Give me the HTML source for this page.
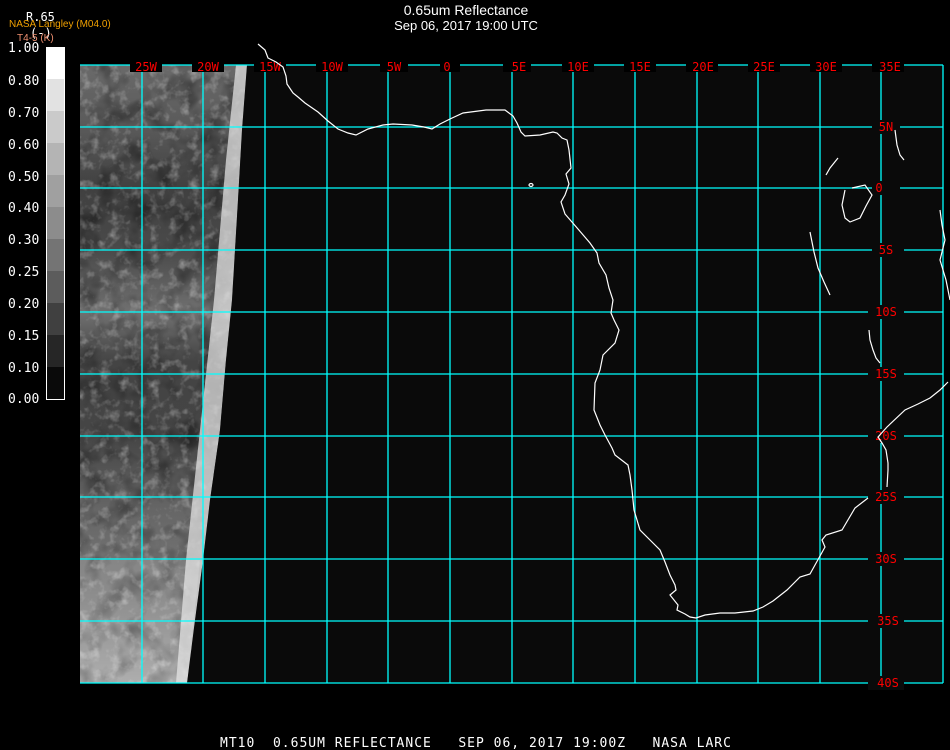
<!DOCTYPE html>
<html><head><meta charset="utf-8"><style>
html,body{margin:0;padding:0;background:#000;width:950px;height:750px;overflow:hidden}
svg{display:block}
text{font-family:"DejaVu Sans Mono","Liberation Mono",monospace}
</style></head><body>
<svg width="950" height="750" viewBox="0 0 950 750" xmlns="http://www.w3.org/2000/svg">
<defs>
<filter id="nw" x="0" y="0" width="100%" height="100%" filterUnits="userSpaceOnUse">
<feTurbulence type="fractalNoise" baseFrequency="0.1" numOctaves="3" seed="4"/>
<feColorMatrix type="matrix" values="0 0 0 0 1  0 0 0 0 1  0 0 0 0 1  1.6 0 0 0 -0.8"/>
</filter>
<filter id="nd" x="0" y="0" width="100%" height="100%" filterUnits="userSpaceOnUse">
<feTurbulence type="fractalNoise" baseFrequency="0.04" numOctaves="3" seed="9"/>
<feColorMatrix type="matrix" values="0 0 0 0 0  0 0 0 0 0  0 0 0 0 0  -1.5 0 0 0 0.85"/>
</filter>
<clipPath id="cp"><polygon points="80,65 247,65 242,130 238,200 232,300 226,360 220,430 210,500 203,560 195,620 187,683 80,683"/></clipPath>
<linearGradient id="v" x1="0" y1="0" x2="0" y2="1">
<stop offset="0" stop-color="#6a6a6a"/>
<stop offset="0.1" stop-color="#5a5a5a"/>
<stop offset="0.2" stop-color="#404040"/>
<stop offset="0.3" stop-color="#4a4a4a"/>
<stop offset="0.4" stop-color="#707070"/>
<stop offset="0.48" stop-color="#444"/>
<stop offset="0.6" stop-color="#454545"/>
<stop offset="0.72" stop-color="#666"/>
<stop offset="0.85" stop-color="#777"/>
<stop offset="1" stop-color="#a0a0a0"/>
</linearGradient>
</defs>
<text x="466" y="15" fill="#fff" font-size="14" text-anchor="middle" style="font-family:'Liberation Sans',sans-serif">0.65um Reflectance</text>
<text x="466" y="30" fill="#fff" font-size="13" text-anchor="middle" style="font-family:'Liberation Sans',sans-serif">Sep 06, 2017 19:00 UTC</text>
<text x="26" y="21" fill="#fff" font-size="12">R.65</text>
<text x="30" y="37" fill="#fff" font-size="12">(-)</text>
<text x="9" y="27" fill="#f0a000" font-size="10" style="font-family:'Liberation Sans',sans-serif">NASA Langley (M04.0)</text>
<text x="17" y="41" fill="#f09070" font-size="10" style="font-family:'Liberation Sans',sans-serif">T4-5 (K)</text>
<g>
<rect x="46" y="47" width="19" height="32" fill="#fff"/>
<rect x="46" y="79" width="19" height="32" fill="#e2e2e2"/>
<rect x="46" y="111" width="19" height="32" fill="#cacaca"/>
<rect x="46" y="143" width="19" height="32" fill="#b4b4b4"/>
<rect x="46" y="175" width="19" height="32" fill="#a0a0a0"/>
<rect x="46" y="207" width="19" height="32" fill="#8c8c8c"/>
<rect x="46" y="239" width="19" height="32" fill="#747474"/>
<rect x="46" y="271" width="19" height="32" fill="#5c5c5c"/>
<rect x="46" y="303" width="19" height="32" fill="#404040"/>
<rect x="46" y="335" width="19" height="32" fill="#262626"/>
<rect x="46" y="367" width="19" height="33" fill="#0a0a0a"/>
<rect x="46.5" y="47.5" width="18" height="352" fill="none" stroke="#fff"/>
</g>
<g fill="#fff" font-size="13">
<text x="8" y="52">1.00</text><text x="8" y="85">0.80</text><text x="8" y="117">0.70</text>
<text x="8" y="149">0.60</text><text x="8" y="181">0.50</text><text x="8" y="212">0.40</text>
<text x="8" y="244">0.30</text><text x="8" y="276">0.25</text><text x="8" y="308">0.20</text>
<text x="8" y="340">0.15</text><text x="8" y="372">0.10</text><text x="8" y="403">0.00</text>
</g>
<rect x="80" y="65" width="863" height="618" fill="#0a0a0a"/>
<g clip-path="url(#cp)">
<rect x="80" y="65" width="170" height="618" fill="url(#v)"/>
<rect x="80" y="65" width="170" height="618" filter="url(#nd)" opacity="0.6"/>
<rect x="80" y="65" width="170" height="618" filter="url(#nw)" opacity="0.55"/>
<polygon points="236,65 247,65 242,130 238,200 232,300 226,360 220,430 210,500 203,560 195,620 187,683 176,683 186,560 200,430 214,300 226,160" fill="#e0e0e0" opacity="0.75"/>
<polygon points="80,560 200,560 187,683 80,683" fill="#fff" opacity="0.15"/>
</g>
<g stroke="#00ffff" stroke-width="1.3" fill="none">
<path d="M142,65V683M203,65V683M265,65V683M327,65V683M388,65V683M450,65V683M512,65V683M573,65V683M635,65V683M697,65V683M758,65V683M820,65V683M881,65V683M943,65V683"/>
<path d="M80,65H943M80,127H943M80,188H943M80,250H943M80,312H943M80,374H943M80,436H943M80,497H943M80,559H943M80,621H943M80,683H943"/>
</g>
<g fill="#000">
<rect x="130" y="60" width="32" height="12"/><rect x="192" y="60" width="32" height="12"/><rect x="254" y="60" width="32" height="12"/>
<rect x="316" y="60" width="32" height="12"/><rect x="380" y="60" width="28" height="12"/><rect x="440" y="60" width="20" height="12"/>
<rect x="503" y="60" width="28" height="12"/><rect x="562" y="60" width="32" height="12"/><rect x="624" y="60" width="32" height="12"/>
<rect x="686" y="60" width="32" height="12"/><rect x="748" y="60" width="32" height="12"/><rect x="810" y="60" width="32" height="12"/><rect x="872" y="60" width="32" height="12"/>
</g>
<g fill="#0a0a0a">
<rect x="872" y="120" width="28" height="14"/><rect x="872" y="181" width="28" height="14"/><rect x="872" y="243" width="32" height="14"/>
<rect x="868" y="305" width="36" height="14"/><rect x="868" y="367" width="36" height="14"/><rect x="868" y="429" width="36" height="14"/>
<rect x="868" y="490" width="36" height="14"/><rect x="868" y="552" width="36" height="14"/><rect x="868" y="614" width="36" height="14"/><rect x="868" y="676" width="36" height="14"/>
</g>
<g fill="#ff0000" font-size="12" text-anchor="middle">
<text x="146" y="71">25W</text><text x="208" y="71">20W</text><text x="270" y="71">15W</text><text x="332" y="71">10W</text>
<text x="394" y="71">5W</text><text x="447" y="71">0</text><text x="519" y="71">5E</text><text x="578" y="71">10E</text>
<text x="640" y="71">15E</text><text x="703" y="71">20E</text><text x="764" y="71">25E</text><text x="826" y="71">30E</text><text x="890" y="71">35E</text>
<text x="886" y="131">5N</text><text x="879" y="192">0</text><text x="886" y="254">5S</text><text x="886" y="316">10S</text>
<text x="886" y="378">15S</text><text x="886" y="440">20S</text><text x="886" y="501">25S</text><text x="886" y="563">30S</text>
<text x="888" y="625">35S</text><text x="888" y="687">40S</text>
</g>
<g stroke="#fff" stroke-width="1.2" fill="none">
<polyline points="258,44 265,50 268,58 276,62 283,67 286,76 287,84 293,93 298,97 305,103 318,112 328,121 338,129 348,133 356,135 368,129 383,125 393,124 412,125 424,127 432,129 440,124 450,119 463,113 486,110 505,110 513,116 517,123 521,132 525,136 540,135 553,132 557,133 562,138 567,140 569,150 571,168 566,174 569,184 565,195 561,202 565,214 578,229 590,243 597,253 599,263 606,275 609,288 613,300 611,313 614,320 619,330 615,343 603,355 600,370 595,383 594,410 600,425 605,435 612,448 615,455 628,465 630,475 632,490 634,510 640,530 650,540 660,550 665,562 670,575 675,585 676,590 670,595 678,605 677,610 685,614 690,617 696,618 705,615 720,613 735,613 753,611 763,607 773,601 787,590 800,577 810,574 815,565 825,547 822,540 826,535 842,530 855,508 868,498"/>
<polyline points="887,487 888,470 888,463 886,450 882,443 878,437 887,427 905,410 918,404 930,398 940,390 948,382"/>
<polyline points="869,330 870,340 873,350 876,358 880,363"/>
<polyline points="895,130 897,145 900,155 904,160"/>
<polyline points="838,158 830,168 826,175"/>
<polyline points="845,190 842,205 845,218 850,222 860,218 866,206 872,195 865,185 852,188"/>
<polyline points="810,232 814,252 818,268 824,282 830,295"/>
<polyline points="940,210 942,225 945,240 940,260 946,280 950,300"/>
<ellipse cx="531" cy="185" rx="2" ry="1.5"/>
</g>
<text x="476" y="747" fill="#fff" font-size="13" letter-spacing="1.0" text-anchor="middle" xml:space="preserve">MT10  0.65UM REFLECTANCE   SEP 06, 2017 19:00Z   NASA LARC</text>
</svg>
</body></html>
